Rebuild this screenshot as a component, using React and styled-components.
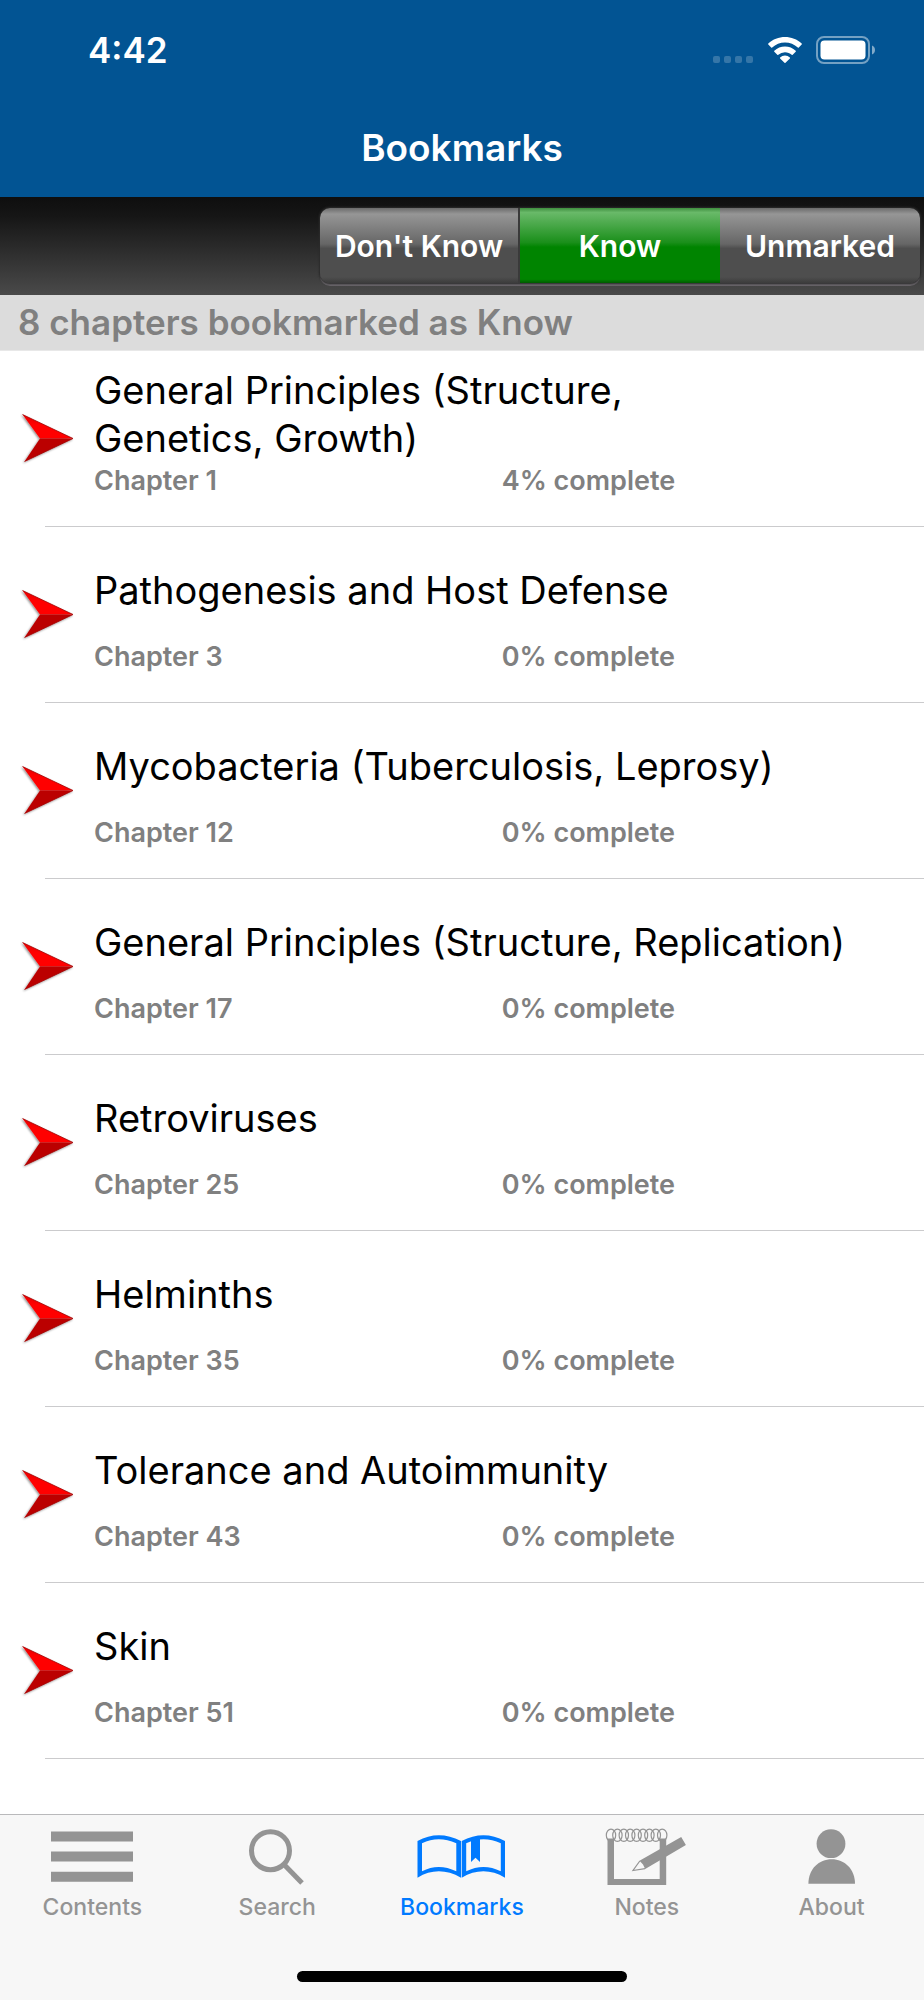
import React, { useState } from 'react';
import styled, { createGlobalStyle, css } from 'styled-components';

const GlobalStyle = createGlobalStyle`
  *, *::before, *::after { box-sizing: border-box; }
  body {
    margin: 0;
    background: #fff;
    color: #000;
    font-family: Inter, "Liberation Sans", sans-serif;
  }
`;

const Page = styled.div`
  display: flex;
  flex-direction: column;
  min-height: 100vh;
`;

const Header = styled.header`
  background: #025493;
  color: #fff;
`;

const StatusBar = styled.div`
  display: flex;
  align-items: center;
  justify-content: space-between;
  height: 100px;
  padding: 0 48px 0 88px;
`;

const Time = styled.time`
  font-size: 35px;
  line-height: 44px;
  font-weight: 600;
`;

const StatusIcons = styled.div`
  display: flex;
  align-items: center;
  gap: 13px;
`;

const NavTitle = styled.h1`
  margin: 0;
  height: 97px;
  font-size: 37px;
  line-height: 96px;
  font-weight: 600;
  text-align: center;
`;

const Toolbar = styled.div`
  display: flex;
  justify-content: flex-end;
  padding: 11px 4px 12px;
  background: linear-gradient(#0e0e0e, #161616 20%, #4a4a4a);
`;

const Segments = styled.div`
  display: grid;
  grid-template-columns: repeat(3, 1fr);
  width: 65%;
  min-width: 600px;
  height: 75px;
  border-radius: 10px;
  overflow: hidden;
  box-shadow: 0 0 2px 1px #2a2a2a, 0 3px 0 #69656a;
`;

const Segment = styled.button`
  border: 0;
  padding: 0;
  color: #fff;
  font: 600 30px/36px Inter, "Liberation Sans", sans-serif;
  background: linear-gradient(#6a6a6a, #969696 8%, #666 48%, #4e4e4e 54%, #4e4e4e 92%, #3c3c3c);

  &:first-child { border-right: 2px solid #3a3a3a; }

  ${({ $active }) => $active && css`
    background: linear-gradient(#3f8f3f, #69b969 6%, #1a8f1a 46%, #008400 52%, #008400 95%, #005a00);
  `}
`;

const Summary = styled.h2`
  margin: 0;
  padding: 0 18px;
  background: #dcdcdc;
  border-bottom: 1px solid #e8e8e8;
  color: #808080;
  font-size: 35px;
  line-height: 55px;
  font-weight: 600;
`;

const ChapterList = styled.ul`
  flex: 1;
  margin: 0;
  padding: 0 0 52px;
  list-style: none;
`;

const ChapterItem = styled.li`
  &::after {
    content: "";
    display: block;
    height: 1px;
    margin-left: 45px;
    background: #cbcbcd;
  }
`;

const ChapterLink = styled.a`
  display: flex;
  align-items: center;
  gap: 20px;
  height: 175px;
  padding-left: 20px;
  color: inherit;
  text-decoration: none;
`;

const ChapterText = styled.div`
  flex: 1;
  padding-bottom: 14px;
`;

const ChapterTitle = styled.div`
  display: flex;
  align-items: center;
  height: 96px;
  padding-right: 40px;
  font-size: 38px;
  line-height: 48px;
  white-space: pre-line;
`;

const ChapterMeta = styled.div`
  display: grid;
  grid-template-columns: 49fr 51fr;
  column-gap: 2px;
  margin-top: 3px;
  color: #808080;
  font-size: 27px;
  line-height: 32px;
  font-weight: 600;
`;

const TabBar = styled.nav`
  border-top: 1px solid #b9b9bb;
  background: #f7f7f7;
`;

const Tabs = styled.div`
  display: grid;
  grid-template-columns: repeat(5, 1fr);
  padding-top: 11px;
`;

const Tab = styled.a`
  display: flex;
  flex-direction: column;
  align-items: center;
  gap: 7px;
  color: ${({ $active }) => ($active ? '#007aff' : '#949494')};
  font-size: 23px;
  line-height: 28px;
  font-weight: 500;
  text-decoration: none;
`;

const HomeIndicator = styled.div`
  width: 330px;
  height: 11px;
  margin: 50px auto 18px;
  border-radius: 6px;
  background: #000;
`;

const SignalIcon = () => (
  <svg width="42" height="28" fill="#fff" opacity="0.2" aria-hidden="true">
    {[0, 11, 22, 33].map((x) => (
      <rect key={x} x={x + 1} y="20" width="7" height="7" rx="2" />
    ))}
  </svg>
);

const WifiIcon = () => (
  <svg width="36" height="28" viewBox="0 0 36 28" fill="#fff" aria-hidden="true">
    <path d="M18 6.4c4.9 0 9.400 1.900 12.800 5.100.3.300.7.300 1 0l2.900-2.900c.3-.3.300-.7 0-1C30.200 3.300 24.200 1 18 1S5.800 3.300 1.300 7.600c-.3.300-.3.700 0 1l2.900 2.900c.3.300.7.300 1 0C8.600 8.300 13.100 6.400 18 6.400Z" />
    <path d="M18 15.200c2.600 0 4.900 1 6.700 2.600.3.300.7.300 1 0l3-3c.3-.3.300-.7 0-1a15.600 15.600 0 0 0-21.400 0c-.3.300-.3.700 0 1l3 3c.3.300.7.300 1 0a9.900 9.900 0 0 1 6.700-2.600Z" transform="translate(0 1)" />
    <path d="M22.900 21.400c.3.300.3.700 0 1l-4.400 4.300c-.3.300-.7.300-1 0l-4.400-4.300c-.3-.3-.3-.7 0-1a7.400 7.400 0 0 1 9.800 0Z" />
  </svg>
);

const BatteryIcon = () => (
  <svg width="60" height="28" viewBox="0 0 60 28" fill="#fff" aria-hidden="true">
    <rect x="1" y="1" width="52" height="26" rx="7" fill="none" stroke="#fff" strokeOpacity="0.45" strokeWidth="2" />
    <rect x="4.500" y="4.500" width="45" height="19" rx="4" />
    <path d="M56 9.500c2 .8 3 2.600 3 4.500s-1 3.700-3 4.500Z" opacity="0.5" />
  </svg>
);

const ArrowIcon = () => (
  <svg width="54" height="54" viewBox="0 0 54 54" aria-hidden="true">
    <defs>
      <linearGradient id="arrow-top" x1="0" y1="1" x2="0.3" y2="0">
        <stop offset="0.600" stopColor="#ff0000" />
        <stop offset="1" stopColor="#e00000" />
      </linearGradient>
      <filter id="arrow-shadow" x="-20%" y="-20%" width="140%" height="140%">
        <feDropShadow dx="-1" dy="1" stdDeviation="1" floodColor="#000" floodOpacity="0.45" />
      </filter>
    </defs>
    <g filter="url(#arrow-shadow)">
      <path d="M2.500 2.500 53 26.500H20Z" fill="url(#arrow-top)" />
      <path d="M53 26.500 4.500 49.500 20 26.500Z" fill="#bb0000" />
      <path d="M2.500 2.500 53 26.500 4.500 49.500" fill="none" stroke="#a00000" strokeWidth="0.800" />
    </g>
  </svg>
);

const TabIcon = ({ children }) => (
  <svg width="92" height="60" viewBox="0 0 92 60" fill="currentColor" aria-hidden="true">
    {children}
  </svg>
);

const ContentsIcon = () => (
  <TabIcon>
    <path d="M5 5.500h82v10H5zM5 25.600h82v10H5zM5 45.700h82v10H5z" />
  </TabIcon>
);

const SearchIcon = () => (
  <TabIcon>
    <g fill="none" stroke="currentColor" strokeWidth="5">
      <circle cx="39.500" cy="24.700" r="19" />
      <path d="M53 38.500 71 57" />
    </g>
  </TabIcon>
);

const BookIcon = () => (
  <TabIcon>
    <path
      fillRule="evenodd"
      d="M1.500 15Q22.500 3.600 45 15V51.700Q22.500 39 1.500 51.700ZM6 17.200V45.300Q22.500 36.700 40.300 45.300V17.200Q22.500 9.500 6 17.200Z"
    />
    <path
      fillRule="evenodd"
      d="M45.700 15Q67.500 3.600 89 15V51.700Q67.500 39 45.700 51.700ZM50.200 17.200V45.300Q67.500 36.700 84.800 45.300V17.200Q67.500 9.500 50.200 17.200Z"
    />
    <path d="M55 12h9v24l-4.500-4.200L55 36Z" />
  </TabIcon>
);

const NotesIcon = () => (
  <TabIcon>
    <path d="M6.500 12.500H13V53H58.700V12.500H65.200V59H6.500Z" />
    <g fill="none" stroke="currentColor" strokeWidth="1.200">
      {[0, 1, 2, 3, 4, 5, 6, 7, 8].map((i) => (
        <ellipse key={i} cx={10 + i * 6.4} cy="9.300" rx="4.700" ry="6.100" />
      ))}
      <path d="M38.800 35 32 44.500 44 42.700" />
    </g>
    <path d="M80.200 11 84.900 19 44.200 43 42 38.500 38.500 34.700Z" />
  </TabIcon>
);

const AboutIcon = () => (
  <TabIcon>
    <circle cx="45" cy="17.700" r="14.400" />
    <path d="M22.400 57.700C22.400 43 33 33.300 45.700 33.300S69 43 69 57.700Z" />
  </TabIcon>
);

const filters = ["Don't Know", 'Know', 'Unmarked'];

const chapters = [
  { number: 1, title: 'General Principles (Structure,\nGenetics, Growth)', complete: 4 },
  { number: 3, title: 'Pathogenesis and Host Defense', complete: 0 },
  { number: 12, title: 'Mycobacteria (Tuberculosis, Leprosy)', complete: 0 },
  { number: 17, title: 'General Principles (Structure, Replication)', complete: 0 },
  { number: 25, title: 'Retroviruses', complete: 0 },
  { number: 35, title: 'Helminths', complete: 0 },
  { number: 43, title: 'Tolerance and Autoimmunity', complete: 0 },
  { number: 51, title: 'Skin', complete: 0 },
];

const tabs = [
  { label: 'Contents', Icon: ContentsIcon },
  { label: 'Search', Icon: SearchIcon },
  { label: 'Bookmarks', Icon: BookIcon },
  { label: 'Notes', Icon: NotesIcon },
  { label: 'About', Icon: AboutIcon },
];

export default function App() {
  const [filter, setFilter] = useState('Know');

  return (
    <Page>
      <GlobalStyle />
      <Header>
        <StatusBar>
          <Time>4:42</Time>
          <StatusIcons>
            <SignalIcon />
            <WifiIcon />
            <BatteryIcon />
          </StatusIcons>
        </StatusBar>
        <NavTitle>Bookmarks</NavTitle>
      </Header>
      <Toolbar>
        <Segments role="group" aria-label="Bookmark filter">
          {filters.map((name) => (
            <Segment
              key={name}
              type="button"
              $active={name === filter}
              aria-pressed={name === filter}
              onClick={() => setFilter(name)}
            >
              {name}
            </Segment>
          ))}
        </Segments>
      </Toolbar>
      <Summary>8 chapters bookmarked as Know</Summary>
      <ChapterList>
        {chapters.map(({ number, title, complete }) => (
          <ChapterItem key={number}>
            <ChapterLink href={`#chapter-${number}`}>
              <ArrowIcon />
              <ChapterText>
                <ChapterTitle>{title}</ChapterTitle>
                <ChapterMeta>
                  <span>Chapter {number}</span>
                  <span>{complete}% complete</span>
                </ChapterMeta>
              </ChapterText>
            </ChapterLink>
          </ChapterItem>
        ))}
      </ChapterList>
      <TabBar aria-label="Main">
        <Tabs>
          {tabs.map(({ label, Icon }) => (
            <Tab
              key={label}
              href={`#${label.toLowerCase()}`}
              $active={label === 'Bookmarks'}
              aria-current={label === 'Bookmarks' ? 'page' : undefined}
            >
              <Icon />
              {label}
            </Tab>
          ))}
        </Tabs>
        <HomeIndicator />
      </TabBar>
    </Page>
  );
}
